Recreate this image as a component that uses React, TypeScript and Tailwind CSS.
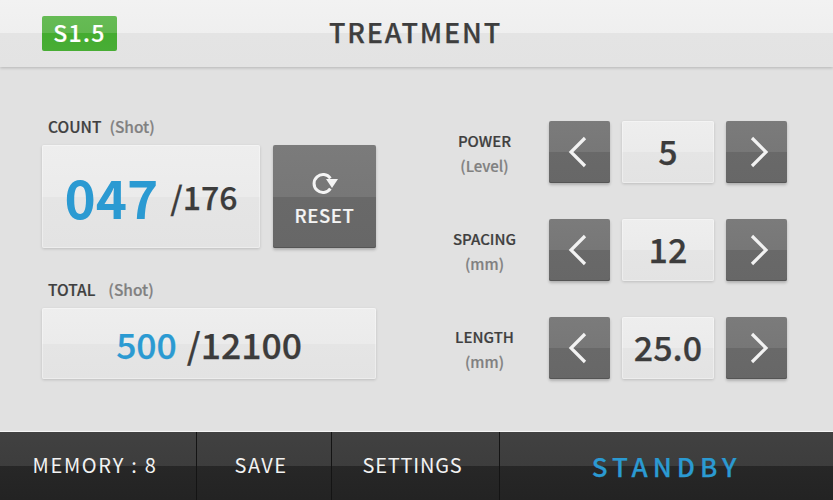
import React from 'react';

const font = { fontFamily: '"Noto Sans CJK KR", "Noto Sans", sans-serif' };

const darkBtn =
  'flex items-center justify-center rounded-[2px] bg-[linear-gradient(#7b7b7b_0%,#777777_50%,#696969_50%,#676767_100%)] shadow-[0_2px_3px_rgba(0,0,0,0.22),inset_0_-1px_0_#555555]';
const lightCard =
  'flex items-center justify-center rounded-[2px] bg-[linear-gradient(#eeeeee_0%,#ebebeb_50%,#e5e5e5_50%,#e3e3e3_100%)] shadow-[0_1px_3px_rgba(0,0,0,0.16),inset_0_0_0_1px_rgba(255,255,255,0.35)]';

function Chevron({ dir }: { dir: 'left' | 'right' }) {
  return (
    <svg width="20" height="32" viewBox="0 0 20 32" fill="none" className={dir === 'left' ? 'mr-[4px]' : 'ml-[4px]'}>
      <path
        d={dir === 'left' ? 'M17 2 L3 16 L17 30' : 'M3 2 L17 16 L3 30'}
        stroke="#f2f2f2"
        strokeWidth="3.2"
      />
    </svg>
  );
}

function Stepper({ label, unit, value }: { label: string; unit: string; value: string }) {
  return (
    <div className="flex h-[62px] items-center">
      <div className="w-[118px] pt-[1px] pr-[11px] text-center">
        <div className="text-[15px] leading-[25px] font-medium text-[#3f3f3f] [-webkit-text-stroke:0.2px_#3f3f3f]">{label}</div>
        <div className="text-[15px] leading-[25px] font-medium text-[#808080] [-webkit-text-stroke:0.2px_#808080]">{unit}</div>
      </div>
      <button className={`${darkBtn} h-[62px] w-[61px]`}>
        <Chevron dir="left" />
      </button>
      <div className={`${lightCard} mx-3 h-[62px] w-[92px] pb-[4px] text-[34px] font-medium text-[#3c3c3c] [-webkit-text-stroke:0.25px_#3c3c3c]`}>{value}</div>
      <button className={`${darkBtn} h-[62px] w-[61px]`}>
        <Chevron dir="right" />
      </button>
    </div>
  );
}

function FooterCell({ width, children }: { width: string; children: React.ReactNode }) {
  return (
    <div className={`${width} flex items-center justify-center border-r border-[#141414] pb-[2px] last:border-r-0`}>
      {children}
    </div>
  );
}

export default function App() {
  return (
    <div className="flex h-[500px] w-[833px] flex-col overflow-hidden bg-[#e1e1e1]" style={font}>
      <header className="relative z-10 flex h-[67px] items-center bg-[linear-gradient(#f2f2f2_0%,#efefef_50%,#e4e4e4_50%,#e3e3e3_100%)] pl-[42px] shadow-[0_1px_3px_rgba(0,0,0,0.2)]">
        <div className="flex h-[35px] w-[75px] items-center justify-center rounded-[2px] bg-[linear-gradient(#66bb55_0%,#62b850_50%,#44ac30_50%,#48ad35_100%)] pb-[2px] text-[23px] font-medium tracking-[1.4px] text-white [-webkit-text-stroke:0.2px_white]">
          S1.5
        </div>
        <h1 className="ml-[212px] pb-[2px] text-[27px] font-medium tracking-[1.8px] text-[#3e3e3e] [-webkit-text-stroke:0.25px_#3e3e3e]">TREATMENT</h1>
      </header>

      <main className="flex flex-1 justify-between pr-[46px] pl-[42px]">
        <section className="w-[334px] pt-[49px]">
          <div className="flex h-[22px] items-center pl-[6px] text-[15.5px] font-medium [-webkit-text-stroke:0.2px_currentColor]">
            <span className="text-[#3f3f3f]">COUNT</span>
            <span className="ml-[8px] text-[#808080]">(Shot)</span>
          </div>
          <div className="mt-[7px] flex gap-[13px]">
            <div className={`${lightCard} h-[103px] w-[218px] items-baseline`}>
              <span className="text-[53px] leading-[99px] font-bold text-[#2b9ad2]">047</span>
              <span className="ml-[12px] text-[32px] leading-[99px] font-medium text-[#3c3c3c] [-webkit-text-stroke:0.25px_#3c3c3c]">/176</span>
            </div>
            <button className={`${darkBtn} h-[103px] w-[103px] flex-col`}>
              <svg width="28" height="28" viewBox="0 0 28 28" fill="none" className="mt-[3px]">
                <path d="M19.4 10.3 A9 9 0 1 0 19.4 20.7" stroke="#f4f4f4" strokeWidth="3" />
                <path d="M15 11 H27 L21 20 Z" fill="#f4f4f4" />
              </svg>
              <span className="mt-[6px] text-[18.5px] leading-[26px] font-medium tracking-[0.6px] text-[#f4f4f4] [-webkit-text-stroke:0.2px_#f4f4f4]">RESET</span>
            </button>
          </div>
          <div className="mt-[31px] flex h-[22px] items-center pl-[6px] text-[15.5px] font-medium [-webkit-text-stroke:0.2px_currentColor]">
            <span className="text-[#3f3f3f]">TOTAL</span>
            <span className="ml-[13px] text-[#808080]">(Shot)</span>
          </div>
          <div className={`${lightCard} mt-[7px] h-[71px] w-[334px] items-baseline`}>
            <span className="text-[35.5px] leading-[54px] font-medium text-[#2b9ad2] [-webkit-text-stroke:0.25px_#2b9ad2]">500</span>
            <span className="ml-[10px] text-[35.5px] leading-[54px] font-medium text-[#3c3c3c] [-webkit-text-stroke:0.25px_#3c3c3c]">/12100</span>
          </div>
        </section>

        <section className="flex w-[356px] flex-col gap-[36px] pt-[54px]">
          <Stepper label="POWER" unit="(Level)" value="5" />
          <Stepper label="SPACING" unit="(mm)" value="12" />
          <Stepper label="LENGTH" unit="(mm)" value="25.0" />
        </section>
      </main>

      <footer className="flex h-[69px] border-t border-[#f5f5f5] bg-[linear-gradient(#414141_0%,#3d3d3d_50%,#272727_50%,#232323_100%)] text-[20px] text-[#f2f2f2]">
        <FooterCell width="w-[197px]">
          <span className="pr-[6px] tracking-[1.7px]">MEMORY : 8</span>
        </FooterCell>
        <FooterCell width="w-[135px]">
          <span className="pr-[6px] tracking-[1.5px]">SAVE</span>
        </FooterCell>
        <FooterCell width="w-[168px]">
          <span className="pr-[6px] tracking-[0.8px]">SETTINGS</span>
        </FooterCell>
        <FooterCell width="flex-1">
          <span className="text-[26px] font-medium tracking-[5px] text-[#2b9ad2] [-webkit-text-stroke:0.25px_#2b9ad2]">STANDBY</span>
        </FooterCell>
      </footer>
    </div>
  );
}
